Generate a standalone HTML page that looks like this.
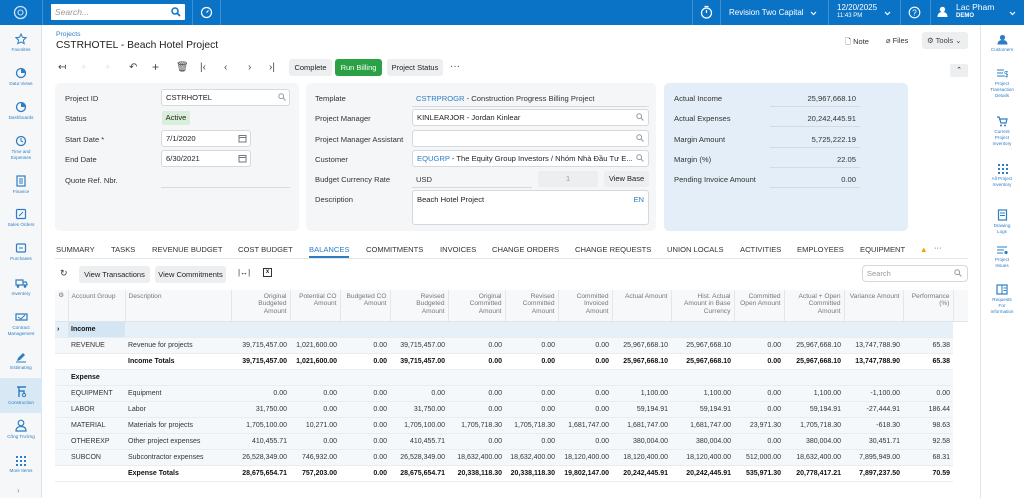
<!DOCTYPE html>
<html><head><meta charset="utf-8"><style>
*{box-sizing:border-box;margin:0;padding:0}
body{width:1024px;height:498px;overflow:hidden;font-family:"Liberation Sans","Noto Sans CJK SC",sans-serif;background:#fff;position:relative;color:#222}
.a{position:absolute}
.top{left:0;top:0;width:1024px;height:25px;background:#0b73c6}
.div{top:0;width:1px;height:25px;background:#3f91d3}
.wt{color:#fff;font-size:8.5px}
.side{left:0;top:25px;width:42px;height:473px;background:#f5f7f9;border-right:1px solid #dfe3e7}
.si{position:absolute;left:0;width:42px;text-align:center;font-size:4.6px;color:#2d7dc4;line-height:5.5px}
.si svg{display:block;margin:0 auto 2px}
.rside{left:980px;top:25px;width:44px;height:473px;background:#fff;border-left:1px solid #e2e5e8}
.ri{position:absolute;left:980px;width:44px;text-align:center;font-size:4.6px;color:#2d7dc4;line-height:5.8px}
.ri svg{display:block;margin:0 auto 2px}
.btn{position:absolute;top:59px;height:17px;background:#eceeef;border-radius:3px;font-size:7.5px;line-height:17px;text-align:center;color:#222}
.ti{position:absolute;top:62px;font-size:10px;color:#444}
.panel{position:absolute;top:83px;height:148px;border-radius:5px}
.lb{position:absolute;font-size:7.6px;color:#333}
.inp{position:absolute;height:17px;border:1px solid #d5d8dc;border-radius:3px;background:#fff;font-size:7.6px;line-height:15px;padding-left:4px}
.ul{position:absolute;height:1px;background:#d4dae0}
.tab{position:absolute;top:245px;font-size:7.6px;color:#333}
table{position:absolute;left:55px;top:290px;width:913px;border-collapse:collapse;table-layout:fixed;font-size:7px}
td,th{padding:0 3px;overflow:hidden;white-space:nowrap}
th{height:31px;vertical-align:top;padding-top:3px;font-weight:normal;color:#777;font-size:6.6px;line-height:7.4px;text-align:right;white-space:normal;border-right:1px solid #e4e6e8;background:#f7f8f9;border-bottom:1px solid #e1e4e7}
td{height:16px;text-align:right;border-bottom:1px solid #eaedf0;color:#333}
td.l{text-align:left}
tr.b td{font-weight:bold;color:#111}
tr.g td{background:#f4f8fb}
tr.inc td{background:#e5f0f9}
</style></head><body>
<div class="a top"></div>
<svg class="a" style="left:12px;top:5px" width="17" height="15" viewBox="0 0 17 15"><circle cx="8.5" cy="7.5" r="6" fill="none" stroke="#cfe3f5" stroke-width="1.3"/><circle cx="8.5" cy="7.5" r="2.5" fill="none" stroke="#cfe3f5" stroke-width="1.1"/></svg>
<div class="a div" style="left:42px"></div>
<div class="a" style="left:51px;top:4px;width:134px;height:16px;background:#fff;border-radius:1px"></div>
<div class="a" style="left:55px;top:7px;font-size:8.5px;color:#999;font-style:italic">Search...</div>
<svg class="a" style="left:171px;top:7px" width="10" height="10"><circle cx="4" cy="4" r="3" fill="none" stroke="#0b73c6" stroke-width="1.5"/><path d="M6 6l3 3" stroke="#0b73c6" stroke-width="1.6"/></svg>
<div class="a div" style="left:192px"></div>
<svg class="a" style="left:200px;top:6px" width="13" height="13"><circle cx="6.5" cy="6.5" r="5" fill="none" stroke="#fff" stroke-width="1.2"/><path d="M6.5 6.5l2-2" stroke="#fff" stroke-width="1.2"/></svg>
<div class="a div" style="left:220px"></div>
<div class="a div" style="left:692px"></div>
<svg class="a" style="left:700px;top:5px" width="13" height="14"><circle cx="6.5" cy="8" r="5" fill="none" stroke="#fff" stroke-width="1.2"/><path d="M4.5 1.5h4M6.5 8V5" stroke="#fff" stroke-width="1.2"/></svg>
<div class="a div" style="left:720px"></div>
<div class="a wt" style="left:729px;top:8px;font-size:8px">Revision Two Capital</div>
<svg class="a" style="left:810px;top:11px" width="7" height="5"><path d="M1 1l2.5 2.5L6 1" stroke="#fff" fill="none" stroke-width="1.2"/></svg>
<div class="a div" style="left:828px"></div>
<div class="a wt" style="left:837px;top:3px;font-size:8px">12/20/2025</div>
<div class="a wt" style="left:837px;top:13px;font-size:6px">11:43 PM</div>
<svg class="a" style="left:884px;top:11px" width="7" height="5"><path d="M1 1l2.5 2.5L6 1" stroke="#fff" fill="none" stroke-width="1.2"/></svg>
<div class="a div" style="left:900px"></div>
<svg class="a" style="left:908px;top:6px" width="13" height="13"><circle cx="6.5" cy="6.5" r="5.3" fill="none" stroke="#fff" stroke-width="1.1"/><text x="4.3" y="9.3" fill="#fff" font-size="8" font-family="Liberation Sans">?</text></svg>
<div class="a div" style="left:930px"></div>
<svg class="a" style="left:937px;top:6px" width="11" height="12"><circle cx="5.5" cy="3.5" r="2.7" fill="#fff"/><path d="M0.5 11c0-3.5 2-5 5-5s5 1.5 5 5z" fill="#fff"/></svg>
<div class="a wt" style="left:956px;top:2px">Lac Pham</div>
<div class="a wt" style="left:956px;top:13px;font-size:6px;font-weight:bold">DEMO</div>
<svg class="a" style="left:1009px;top:11px" width="7" height="5"><path d="M1 1l2.5 2.5L6 1" stroke="#fff" fill="none" stroke-width="1.2"/></svg>

<div class="a side"></div>
<div class="a" style="left:0;top:378px;width:42px;height:35px;background:#d8e8f5"></div>
<div class="si" style="top:33px"><svg width="12" height="12"><path d="M6 1l1.5 3.3 3.6.4-2.7 2.4.8 3.6L6 8.9 2.8 10.7l.8-3.6L.9 4.7l3.6-.4z" fill="none" stroke="#2d7dc4"/></svg>Favorites</div>
<div class="si" style="top:67px"><svg width="12" height="12"><circle cx="6" cy="6" r="4.5" fill="none" stroke="#2d7dc4" stroke-width="1.3"/><path d="M6 6V1.5A4.5 4.5 0 0 1 10.5 6z" fill="#2d7dc4"/></svg>Data Views</div>
<div class="si" style="top:101px"><svg width="12" height="12"><circle cx="6" cy="6" r="4.5" fill="none" stroke="#2d7dc4" stroke-width="1.3"/><path d="M6 6V1.5A4.5 4.5 0 0 1 10.5 6z" fill="#2d7dc4"/></svg>Dashboards</div>
<div class="si" style="top:135px"><svg width="12" height="12"><circle cx="6" cy="6" r="4.5" fill="none" stroke="#2d7dc4" stroke-width="1.3"/><path d="M6 3v3l2 1" stroke="#2d7dc4" fill="none"/></svg>Time and<br>Expenses</div>
<div class="si" style="top:175px"><svg width="12" height="12"><rect x="2" y="1" width="8" height="10" fill="none" stroke="#2d7dc4" stroke-width="1.2"/><path d="M4 4h4M4 6h4M4 8h4" stroke="#2d7dc4"/></svg>Finance</div>
<div class="si" style="top:208px"><svg width="12" height="12"><rect x="1.5" y="1.5" width="9" height="9" rx="1" fill="none" stroke="#2d7dc4" stroke-width="1.2"/><path d="M4 8l4-4" stroke="#2d7dc4"/></svg>Sales Orders</div>
<div class="si" style="top:242px"><svg width="12" height="12"><rect x="1.5" y="2" width="9" height="8" rx="1" fill="none" stroke="#2d7dc4" stroke-width="1.2"/><path d="M4 6h4" stroke="#2d7dc4"/></svg>Purchases</div>
<div class="si" style="top:277px"><svg width="13" height="12"><path d="M1 3h7v5H1zM8 5h3l1 2v1H8" fill="none" stroke="#2d7dc4" stroke-width="1.2"/><circle cx="3" cy="9.5" r="1.3" fill="#2d7dc4"/><circle cx="10" cy="9.5" r="1.3" fill="#2d7dc4"/></svg>Inventory</div>
<div class="si" style="top:311px"><svg width="13" height="12"><path d="M1 3h11v6H1z" fill="none" stroke="#2d7dc4" stroke-width="1.2"/><path d="M3 6l3 2 4-4" stroke="#2d7dc4" fill="none"/></svg>Contract<br>Management</div>
<div class="si" style="top:351px"><svg width="12" height="12"><path d="M2 10l1-3 5-5 2 2-5 5z" fill="#2d7dc4"/><path d="M1 11h10" stroke="#2d7dc4"/></svg>Estimating</div>
<div class="si" style="top:385px"><svg width="13" height="13"><path d="M2 2h9M4 2v10M4 6h5v3" stroke="#2d7dc4" stroke-width="1.4" fill="none"/><circle cx="9" cy="10" r="1.6" fill="none" stroke="#2d7dc4"/></svg>Construction</div>
<div class="si" style="top:419px"><svg width="12" height="13"><circle cx="6" cy="4" r="2.8" fill="none" stroke="#2d7dc4" stroke-width="1.2"/><path d="M1 12c0-3 2-4.5 5-4.5s5 1.5 5 4.5z" fill="none" stroke="#2d7dc4" stroke-width="1.2"/></svg>Công Trường</div>
<div class="si" style="top:455px"><svg width="12" height="11"><g fill="#2d7dc4"><rect x="1" y="1" width="2" height="2"/><rect x="5" y="1" width="2" height="2"/><rect x="9" y="1" width="2" height="2"/><rect x="1" y="5" width="2" height="2"/><rect x="5" y="5" width="2" height="2"/><rect x="9" y="5" width="2" height="2"/><rect x="1" y="9" width="2" height="2"/><rect x="5" y="9" width="2" height="2"/><rect x="9" y="9" width="2" height="2"/></g></svg>More Items</div>
<div class="a" style="left:17px;top:486px;font-size:8px;color:#888">›</div>

<div class="a rside"></div>
<div class="ri" style="top:34px"><svg width="11" height="11"><circle cx="5.5" cy="3.5" r="2.6" fill="#2d7dc4"/><path d="M0.5 10.5c0-3 2-4.5 5-4.5s5 1.5 5 4.5z" fill="#2d7dc4"/></svg>Customers</div>
<div class="ri" style="top:68px"><svg width="12" height="11"><path d="M1 2h7M1 5h6M1 8h7" stroke="#2d7dc4" stroke-width="1.1"/><text x="8" y="9" font-size="8" fill="#2d7dc4" font-family="Liberation Sans">$</text></svg>Project<br>Transaction<br>Details</div>
<div class="ri" style="top:115px"><svg width="12" height="12"><path d="M1 2h2l2 6h5l1-4H4" fill="none" stroke="#2d7dc4" stroke-width="1.2"/><circle cx="5" cy="10.5" r="1" fill="#2d7dc4"/><circle cx="9" cy="10.5" r="1" fill="#2d7dc4"/></svg>Current<br>Project<br>Inventory</div>
<div class="ri" style="top:163px"><svg width="11" height="11"><g fill="#2d7dc4"><rect x="1" y="1" width="2" height="2"/><rect x="5" y="1" width="2" height="2"/><rect x="9" y="1" width="2" height="2"/><rect x="1" y="5" width="2" height="2"/><rect x="5" y="5" width="2" height="2"/><rect x="9" y="5" width="2" height="2"/><rect x="1" y="9" width="2" height="2"/><rect x="5" y="9" width="2" height="2"/><rect x="9" y="9" width="2" height="2"/></g></svg>All Project<br>Inventory</div>
<div class="ri" style="top:209px"><svg width="11" height="12"><rect x="1.5" y="1" width="8" height="10" fill="none" stroke="#2d7dc4" stroke-width="1.2"/><path d="M3 4h5M3 6.5h5" stroke="#2d7dc4"/></svg>Drawing<br>Logs</div>
<div class="ri" style="top:245px"><svg width="12" height="10"><path d="M1 2h10M1 5h7M1 8h6" stroke="#2d7dc4" stroke-width="1.1"/><circle cx="10" cy="7.5" r="1.6" fill="#2d7dc4"/></svg>Project<br>Issues</div>
<div class="ri" style="top:284px"><svg width="12" height="11"><rect x="1" y="1" width="10" height="9" fill="none" stroke="#2d7dc4" stroke-width="1.2"/><path d="M6 1v9M7.5 4h2.5M7.5 6.5h2.5" stroke="#2d7dc4"/></svg>Requests<br>For<br>Information</div>

<div class="a" style="left:56px;top:31px;font-size:6.8px;color:#2d7dc4">Projects</div>
<div class="a" style="left:56px;top:40px;font-size:10.3px;color:#222">CSTRHOTEL - Beach Hotel Project</div>
<div class="a" style="left:845px;top:36px;font-size:7.5px;color:#333">🗋 Note</div>
<div class="a" style="left:886px;top:36px;font-size:7.5px;color:#333">⌀ Files</div>
<div class="a" style="left:922px;top:32px;width:46px;height:17px;background:#eceeef;border-radius:3px;font-size:7.5px;line-height:17px;padding-left:5px;color:#444">⚙ Tools ⌄</div>
<div class="a" style="left:950px;top:64px;width:18px;height:13px;background:#eceeef;border-radius:2px;font-size:7px;text-align:center;line-height:13px">⌃</div>

<div class="ti" style="left:58px">↤</div>
<div class="ti" style="left:82px;color:#ccc">▫</div>
<div class="ti" style="left:106px;color:#ccc">▫</div>
<div class="ti" style="left:129px">↶</div>
<div class="ti" style="left:152px;font-size:12px;top:60px">+</div>
<div class="ti" style="left:176px">🗑</div>
<div class="ti" style="left:200px">|‹</div>
<div class="ti" style="left:224px">‹</div>
<div class="ti" style="left:248px">›</div>
<div class="ti" style="left:269px">›|</div>
<div class="btn" style="left:289px;width:43px">Complete</div>
<div class="btn" style="left:335px;width:47px;background:#2aa144;color:#fff">Run Billing</div>
<div class="btn" style="left:387px;width:56px">Project Status</div>
<div class="ti" style="left:450px;top:61px">···</div>

<div class="panel" style="left:55px;width:244px;background:#f5f6f7"></div>
<div class="panel" style="left:306px;width:350px;background:#f5f6f7"></div>
<div class="panel" style="left:664px;width:244px;background:#e3eef8"></div>

<div class="lb" style="left:65px;top:94px">Project ID</div>
<div class="inp" style="left:161px;top:89px;width:129px">CSTRHOTEL</div>
<div class="lb" style="left:65px;top:114px">Status</div>
<div class="a" style="left:162px;top:111px;width:28px;height:14px;background:#d9efd9;border-radius:2px;font-size:7.6px;line-height:14px;text-align:center">Active</div>
<div class="lb" style="left:65px;top:135px">Start Date *</div>
<div class="inp" style="left:161px;top:130px;width:90px">7/1/2020</div>
<div class="lb" style="left:65px;top:155px">End Date</div>
<div class="inp" style="left:161px;top:150px;width:90px">6/30/2021</div>
<div class="lb" style="left:65px;top:176px">Quote Ref. Nbr.</div>
<div class="ul" style="left:161px;top:187px;width:129px"></div>

<div class="lb" style="left:315px;top:94px">Template</div>
<div class="lb" style="left:416px;top:94px"><span style="color:#2d7dc4">CSTRPROGR</span> - Construction Progress Billing Project</div>
<div class="ul" style="left:412px;top:106px;width:237px"></div>
<div class="lb" style="left:315px;top:114px">Project Manager</div>
<div class="inp" style="left:412px;top:109px;width:237px">KINLEARJOR - Jordan Kinlear</div>
<div class="lb" style="left:315px;top:135px">Project Manager Assistant</div>
<div class="inp" style="left:412px;top:130px;width:237px"></div>
<div class="lb" style="left:315px;top:155px">Customer</div>
<div class="inp" style="left:412px;top:150px;width:237px"><span style="color:#2d7dc4">EQUGRP</span> - The Equity Group Investors / Nhóm Nhà Đầu Tư E...</div>
<div class="lb" style="left:315px;top:175px">Budget Currency Rate</div>
<div class="lb" style="left:416px;top:175px">USD</div>
<div class="ul" style="left:412px;top:187px;width:120px"></div>
<div class="a" style="left:538px;top:171px;width:60px;height:16px;background:#eceeef;border-radius:2px;font-size:7.4px;color:#999;text-align:center;line-height:16px">1</div>
<div class="btn" style="left:604px;top:171px;height:16px;line-height:16px;width:45px">View Base</div>
<div class="lb" style="left:315px;top:195px">Description</div>
<div class="inp" style="left:412px;top:190px;width:237px;height:35px;line-height:17px">Beach Hotel Project<span style="position:absolute;right:4px;top:0;color:#2d7dc4">EN</span></div>
<svg class="a" style="left:278px;top:93px" width="8" height="8"><circle cx="3.2" cy="3.2" r="2.4" fill="none" stroke="#999"/><path d="M5 5l2.5 2.5" stroke="#999"/></svg>
<svg class="a" style="left:636px;top:113px" width="8" height="8"><circle cx="3.2" cy="3.2" r="2.4" fill="none" stroke="#999"/><path d="M5 5l2.5 2.5" stroke="#999"/></svg>
<svg class="a" style="left:636px;top:134px" width="8" height="8"><circle cx="3.2" cy="3.2" r="2.4" fill="none" stroke="#999"/><path d="M5 5l2.5 2.5" stroke="#999"/></svg>
<svg class="a" style="left:636px;top:154px" width="8" height="8"><circle cx="3.2" cy="3.2" r="2.4" fill="none" stroke="#999"/><path d="M5 5l2.5 2.5" stroke="#999"/></svg>
<svg class="a" style="left:238px;top:134px" width="9" height="9"><rect x="1" y="1.5" width="7" height="6.5" fill="none" stroke="#777"/><path d="M1 3.5h7" stroke="#777"/></svg>
<svg class="a" style="left:238px;top:154px" width="9" height="9"><rect x="1" y="1.5" width="7" height="6.5" fill="none" stroke="#777"/><path d="M1 3.5h7" stroke="#777"/></svg>

<div class="lb" style="left:674px;top:94px">Actual Income</div><div class="lb" style="left:770px;top:94px;width:86px;text-align:right">25,967,668.10</div><div class="ul" style="left:770px;top:106px;width:90px"></div>
<div class="lb" style="left:674px;top:114px">Actual Expenses</div><div class="lb" style="left:770px;top:114px;width:86px;text-align:right">20,242,445.91</div><div class="ul" style="left:770px;top:126px;width:90px"></div>
<div class="lb" style="left:674px;top:135px">Margin Amount</div><div class="lb" style="left:770px;top:135px;width:86px;text-align:right">5,725,222.19</div><div class="ul" style="left:770px;top:147px;width:90px"></div>
<div class="lb" style="left:674px;top:155px">Margin (%)</div><div class="lb" style="left:770px;top:155px;width:86px;text-align:right">22.05</div><div class="ul" style="left:770px;top:167px;width:90px"></div>
<div class="lb" style="left:674px;top:175px">Pending Invoice Amount</div><div class="lb" style="left:770px;top:175px;width:86px;text-align:right">0.00</div><div class="ul" style="left:770px;top:187px;width:90px"></div>

<div class="a" style="left:55px;top:258px;width:913px;height:1px;background:#e3e6e9"></div>
<div class="tab" style="left:56px">SUMMARY</div>
<div class="tab" style="left:111px">TASKS</div>
<div class="tab" style="left:152px">REVENUE BUDGET</div>
<div class="tab" style="left:238px">COST BUDGET</div>
<div class="tab" style="left:309px;color:#2d7dc4">BALANCES</div>
<div class="a" style="left:309px;top:256px;width:40px;height:2px;background:#2d7dc4"></div>
<div class="tab" style="left:366px">COMMITMENTS</div>
<div class="tab" style="left:440px">INVOICES</div>
<div class="tab" style="left:492px">CHANGE ORDERS</div>
<div class="tab" style="left:575px">CHANGE REQUESTS</div>
<div class="tab" style="left:667px">UNION LOCALS</div>
<div class="tab" style="left:740px">ACTIVITIES</div>
<div class="tab" style="left:797px">EMPLOYEES</div>
<div class="tab" style="left:860px">EQUIPMENT</div>
<div class="tab" style="left:920px;color:#e8a400">▲</div>
<div class="tab" style="left:934px;top:243px">···</div>

<div class="a" style="left:60px;top:268px;font-size:9px;color:#333">↻</div>
<div class="btn" style="left:79px;top:266px;width:71px">View Transactions</div>
<div class="btn" style="left:155px;top:266px;width:71px">View Commitments</div>
<div class="a" style="left:238px;top:268px;font-size:8px;color:#333">|↔|</div>
<div class="a" style="left:263px;top:268px;width:9px;height:9px;border:1px solid #333;font-size:6px;line-height:7px;text-align:center;font-weight:bold">x</div>
<div class="a" style="left:862px;top:265px;width:106px;height:17px;border:1px solid #d5d8dc;border-radius:4px;font-size:7.5px;color:#999;line-height:15px;padding-left:4px">Search</div>
<svg class="a" style="left:954px;top:269px" width="8" height="8"><circle cx="3.2" cy="3.2" r="2.4" fill="none" stroke="#999"/><path d="M5 5l2.5 2.5" stroke="#999"/></svg>

<table>
<colgroup><col style="width:13px"><col style="width:57px"><col style="width:106px"><col style="width:59px"><col style="width:50px"><col style="width:50px"><col style="width:58px"><col style="width:57px"><col style="width:53px"><col style="width:54px"><col style="width:59px"><col style="width:63px"><col style="width:50px"><col style="width:60px"><col style="width:59px"><col style="width:50px"><col style="width:15px"></colgroup>
<tr><th style="text-align:center;padding:2px 0 0">⚙</th><th style="text-align:left">Account Group</th><th style="text-align:left">Description</th><th style="padding-left:14px">Original Budgeted Amount</th><th>Potential CO Amount</th><th>Budgeted CO Amount</th><th style="padding-left:14px">Revised Budgeted Amount</th><th style="padding-left:10px">Original Committed Amount</th><th>Revised Committed Amount</th><th style="padding-left:10px">Committed Invoiced Amount</th><th>Actual Amount</th><th>Hist. Actual Amount in Base Currency</th><th>Committed Open Amount</th><th>Actual + Open Committed Amount</th><th>Variance Amount</th><th>Performance (%)</th><th style="border-right:0;background:#f7f8f9"></th></tr>
<tr class="inc b"><td class="l" style="padding:0 2px">›</td><td class="l" style="background:#d4e5f4">Income</td><td colspan="14"></td><td style="background:#fff;border:0"></td></tr>
<tr class="g"><td></td><td class="l">REVENUE</td><td class="l">Revenue for projects</td><td>39,715,457.00</td><td>1,021,600.00</td><td>0.00</td><td>39,715,457.00</td><td>0.00</td><td>0.00</td><td>0.00</td><td>25,967,668.10</td><td>25,967,668.10</td><td>0.00</td><td>25,967,668.10</td><td>13,747,788.90</td><td>65.38</td><td style="background:#fff;border:0"></td></tr>
<tr class="b"><td></td><td></td><td class="l">Income Totals</td><td>39,715,457.00</td><td>1,021,600.00</td><td>0.00</td><td>39,715,457.00</td><td>0.00</td><td>0.00</td><td>0.00</td><td>25,967,668.10</td><td>25,967,668.10</td><td>0.00</td><td>25,967,668.10</td><td>13,747,788.90</td><td>65.38</td><td style="border:0"></td></tr>
<tr class="g b"><td></td><td class="l">Expense</td><td colspan="14"></td><td style="background:#fff;border:0"></td></tr>
<tr class="g"><td></td><td class="l">EQUIPMENT</td><td class="l">Equipment</td><td>0.00</td><td>0.00</td><td>0.00</td><td>0.00</td><td>0.00</td><td>0.00</td><td>0.00</td><td>1,100.00</td><td>1,100.00</td><td>0.00</td><td>1,100.00</td><td>-1,100.00</td><td>0.00</td><td style="background:#fff;border:0"></td></tr>
<tr class="g"><td></td><td class="l">LABOR</td><td class="l">Labor</td><td>31,750.00</td><td>0.00</td><td>0.00</td><td>31,750.00</td><td>0.00</td><td>0.00</td><td>0.00</td><td>59,194.91</td><td>59,194.91</td><td>0.00</td><td>59,194.91</td><td>-27,444.91</td><td>186.44</td><td style="background:#fff;border:0"></td></tr>
<tr class="g"><td></td><td class="l">MATERIAL</td><td class="l">Materials for projects</td><td>1,705,100.00</td><td>10,271.00</td><td>0.00</td><td>1,705,100.00</td><td>1,705,718.30</td><td>1,705,718.30</td><td>1,681,747.00</td><td>1,681,747.00</td><td>1,681,747.00</td><td>23,971.30</td><td>1,705,718.30</td><td>-618.30</td><td>98.63</td><td style="background:#fff;border:0"></td></tr>
<tr class="g"><td></td><td class="l">OTHEREXP</td><td class="l">Other project expenses</td><td>410,455.71</td><td>0.00</td><td>0.00</td><td>410,455.71</td><td>0.00</td><td>0.00</td><td>0.00</td><td>380,004.00</td><td>380,004.00</td><td>0.00</td><td>380,004.00</td><td>30,451.71</td><td>92.58</td><td style="background:#fff;border:0"></td></tr>
<tr class="g"><td></td><td class="l">SUBCON</td><td class="l">Subcontractor expenses</td><td>26,528,349.00</td><td>746,932.00</td><td>0.00</td><td>26,528,349.00</td><td>18,632,400.00</td><td>18,632,400.00</td><td>18,120,400.00</td><td>18,120,400.00</td><td>18,120,400.00</td><td>512,000.00</td><td>18,632,400.00</td><td>7,895,949.00</td><td>68.31</td><td style="background:#fff;border:0"></td></tr>
<tr class="b"><td></td><td></td><td class="l">Expense Totals</td><td>28,675,654.71</td><td>757,203.00</td><td>0.00</td><td>28,675,654.71</td><td>20,338,118.30</td><td>20,338,118.30</td><td>19,802,147.00</td><td>20,242,445.91</td><td>20,242,445.91</td><td>535,971.30</td><td>20,778,417.21</td><td>7,897,237.50</td><td>70.59</td><td style="border:0"></td></tr>
</table>
</body></html>
